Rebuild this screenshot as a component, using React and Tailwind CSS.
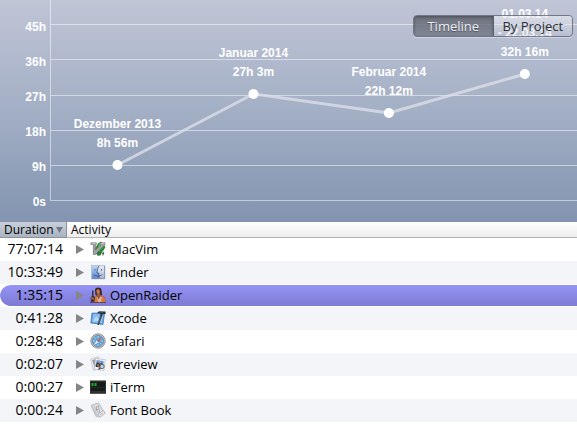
const TICKS = ['45h', '36h', '27h', '18h', '9h', '0s'];
const GRID = [24, 59, 95, 130, 165, 200];

const POINTS = [
  { x: '12.8%', y: 165, lines: ['Dezember 2013', '8h 56m'] },
  { x: '38.6%', y: 94, lines: ['Januar 2014', '27h 3m'] },
  { x: '64.3%', y: 113, lines: ['Februar 2014', '22h 12m'] },
  { x: '90.1%', y: 74, lines: ['01.03.14', '- 22.03.14', '32h 16m'] },
];

function MacVimIcon() {
  return (
    <svg className="block size-4" viewBox="0 0 16 16" aria-hidden="true">
      <path d="M8 2.500 11 .5 15.500 6 13.500 9.500 9 15 3 10.500Z" fill="#2f8a35" />
      <path d="M9 3h4L8 9Z" fill="#6cc264" />
      <path d="M.8 1.800h5.500v1.700H5.500v5.500L11 3.500h-1V1.800h5v2L5.500 13.500H3.300V3.500H.8Z" fill="#9ea29f" stroke="#686e6a" strokeWidth="0.6" />
      <path d="M1.500 2.600h4.300M10.500 2.600h4" stroke="#d9dbda" strokeWidth="0.7" />
      <path d="m8.500 11-1 3.500M10 14.500l1-3 1 1 1.800-1-1 3" fill="none" stroke="#2b5f31" strokeWidth="1" />
    </svg>
  );
}

function FinderIcon() {
  return (
    <svg className="block size-4" viewBox="0 0 16 16" aria-hidden="true">
      <defs>
        <linearGradient id="finderLeft" x2="0" y2="1">
          <stop stopColor="#bcd3f4" />
          <stop offset="1" stopColor="#5b86d0" />
        </linearGradient>
        <linearGradient id="finderRight" x2="0" y2="1">
          <stop stopColor="#e9eef6" />
          <stop offset="1" stopColor="#a9b9d6" />
        </linearGradient>
      </defs>
      <rect x="1.500" y="1.500" width="13" height="13" fill="url(#finderRight)" stroke="#a3b2cc" strokeWidth="0.7" />
      <path d="M2 2h6.500C7.500 4.500 7 6.500 7 9h1.700c0 2 .2 3.500.6 5.500H2Z" fill="url(#finderLeft)" />
      <path d="M9 2C7.500 4.500 7 6.500 7 9h1.700c0 2 .2 3.500.6 5M5 5v1.500M11.500 5v1.500M3.500 10.500c2.500 2 6.500 2 9 0" fill="none" stroke="#34497d" strokeWidth="0.8" />
      <path d="M1.500 14.700h13.200V2" fill="none" stroke="#6f7f9e" strokeWidth="0.7" />
    </svg>
  );
}

function RaiderIcon() {
  return (
    <svg className="block size-4" viewBox="0 0 16 16" aria-hidden="true">
      <path d="M5 3C5.500-.2 11-.2 11.500 3l.5 5-3 2-3.500-2Z" fill="#35211d" />
      <path d="M6 3.500c.5-2 3.500-2 4 0L10 7l2 1.500 3 2 .5 5H4.500V10L7 8Z" fill="#955640" />
      <path d="M7 3.500h2.500L9 6.500H7.500Z" fill="#c98765" />
      <path d="M6 10h1.500l1 2.500 2-3H12L14 15.500H5Z" fill="#d5b9a5" />
      <path d="M5 9.500 6.500 9l2 6.500H4ZM12 9l2.500 1.500 1 5H11Z" fill="#e27435" />
      <path d="M2 3.500h1.500V9L5 10l-.5 4.500L1 15l-.5-4L2 9Z" fill="#343039" />
      <path d="M1 10.500h3v2H1Z" fill="#a3684f" />
      <path d="M0 15.600h16" stroke="#453440" strokeWidth="0.8" />
    </svg>
  );
}

function XcodeIcon() {
  return (
    <svg className="block size-4" viewBox="0 0 16 16" aria-hidden="true">
      <path d="M2 3 14.500 3.500 13 14.500.8 13Z" fill="#4f91dc" stroke="#3972b6" strokeWidth="0.7" />
      <path d="M3 4 13.500 4.500 12.300 13.400 2 12.200Z" fill="#8abef2" />
      <path d="M4 11.500 6.500 7l2.500 5M4.500 10h4" fill="none" stroke="#d8edfd" strokeWidth="0.9" />
      <path d="M10.800 3.500 12.500 5 8.800 15 7.300 14.500Z" fill="#27303b" />
      <path d="M11 6 8.200 13.500" stroke="#8d98a5" strokeWidth="0.6" />
      <path d="M7 3C8.500.8 11 .5 13 1.500L15.500 1.500v2.500L13 4 12 4.800 10 3.500Z" fill="#252d38" />
      <path d="M8.800 2c1.300-.6 2.500-.4 3.700.4" fill="none" stroke="#a7b3c0" strokeWidth="0.7" />
    </svg>
  );
}

function SafariIcon() {
  return (
    <svg className="block size-4" viewBox="0 0 16 16" aria-hidden="true">
      <circle cx="8" cy="8" r="7.200" fill="#c3c6ca" stroke="#868b92" strokeWidth="0.9" />
      <circle cx="8" cy="8" r="5.600" fill="#64a5dc" stroke="#687a8d" strokeWidth="0.7" />
      <path d="M8 3v1.500M8 11.500V13M3 8h1.500M11.500 8H13M4.500 4.500l1 1M10.500 10.500l1 1" stroke="#e8f4ff" strokeWidth="0.8" />
      <path d="M12 4 9 9 7 7Z" fill="#d0685c" />
      <path d="M4 12 7 7 9 9Z" fill="#f3f6f8" />
      <circle cx="8" cy="8" r="0.800" fill="#34516e" />
    </svg>
  );
}

function PreviewIcon() {
  return (
    <svg className="block size-4" viewBox="0 0 16 16" aria-hidden="true">
      <path d="M.8 3 8.500.8 11.500 12 3.500 14.500Z" fill="#f3f3f3" stroke="#b9bcc0" strokeWidth="0.7" />
      <path d="M2.200 4 8 2.500l2 7.500-5.500 1.500Z" fill="#8d98aa" />
      <path d="M5.500 2.500 15.200 3.700 14 14.500 4.500 13Z" fill="#fafafa" stroke="#b4b8bd" strokeWidth="0.7" />
      <path d="M6.500 4 13.800 5 13 11.800 5.500 10.700Z" fill="#78a2d6" />
      <path d="m5.800 8.500 2-2.500 2 2 1.800-1.500 1.700 2-.5 3.500-7-1.300Z" fill="#3f3230" />
      <path d="m7.800 8 .5 2.500M11 7.500l.3 2" stroke="#dfa673" />
      <circle cx="12" cy="10.500" r="2.200" fill="#c0cfdb" stroke="#4d545d" strokeWidth="0.8" />
      <path d="M10.300 12 8.500 13.500" stroke="#343a42" strokeWidth="1.200" />
    </svg>
  );
}

function ITermIcon() {
  return (
    <svg className="block size-4" viewBox="0 0 16 16" aria-hidden="true">
      <rect y="1" width="16" height="14" fill="#303231" />
      <rect y="1" width="16" height="1" fill="#8b8e8c" />
      <rect x="1" y="3" width="14" height="9" fill="#161d18" />
      <path d="M1 8.500h14" stroke="#2b322d" strokeWidth="0.7" />
      <path d="M1.500 4h2v3h-2ZM4.500 4h2v3h-2Z" fill="#25a636" />
      <path d="M0 14.500h16" stroke="#555856" />
    </svg>
  );
}

function FontBookIcon() {
  return (
    <svg className="block size-4" viewBox="0 0 16 16" aria-hidden="true">
      <path d="M1 3.500 8.500.8l6 9.700-5.500 4.500-3-.5Z" fill="#d4d6d9" stroke="#b0b3b7" strokeWidth="0.7" />
      <path d="m3 4 5-2 5.300 8.500L8.500 14Z" fill="#e2e3e6" />
      <path d="m2 4.500 5 9.500M4 3.600 9 12.700" stroke="#b3b6ba" strokeWidth="0.8" />
      <path d="m6.500 4.500 2-.8 1 7M6.500 4.500l-.3 4.500M6.500 8l2-1" fill="none" stroke="#a0a3a8" strokeWidth="0.9" />
      <path d="m8 12.500 5-4.300 2.200 3L10 15.300Z" fill="#eeeeef" stroke="#a6a9ad" strokeWidth="0.8" />
      <path d="m10 13 3-2.500" stroke="#9b9ea2" strokeWidth="0.8" />
    </svg>
  );
}

const ROWS = [
  { time: '77:07:14', name: 'MacVim', Icon: MacVimIcon },
  { time: '10:33:49', name: 'Finder', Icon: FinderIcon },
  { time: '1:35:15', name: 'OpenRaider', Icon: RaiderIcon, selected: true },
  { time: '0:41:28', name: 'Xcode', Icon: XcodeIcon },
  { time: '0:28:48', name: 'Safari', Icon: SafariIcon },
  { time: '0:02:07', name: 'Preview', Icon: PreviewIcon },
  { time: '0:00:27', name: 'iTerm', Icon: ITermIcon },
  { time: '0:00:24', name: 'Font Book', Icon: FontBookIcon },
];

function Timeline() {
  return (
    <section className="relative flex h-[222px] bg-linear-to-b from-[#c0c5d6] via-[#a3afc5] to-[#8294b0] font-['Liberation_Sans',Arial,sans-serif] text-xs font-bold text-white">
      <div className="flex w-[50px] flex-col pt-2 pr-1 text-right">
        {TICKS.map((t) => (
          <span key={t} className="h-[35px] pt-[11px] leading-4">{t}</span>
        ))}
      </div>
      <svg className="h-full min-w-0 flex-1" role="img" aria-label="Time per month">
        <g shapeRendering="crispEdges" fill="#ffffff" fillOpacity="0.5">
          <rect width="1" height="201" />
          {GRID.map((y) => (
            <rect key={y} x="1" y={y} width="100%" height="1" />
          ))}
        </g>
        {POINTS.slice(1).map((p, i) => (
          <line key={p.x} x1={POINTS[i].x} y1={POINTS[i].y} x2={p.x} y2={p.y} stroke="#dcdfe9" strokeOpacity="0.8" strokeWidth="3" />
        ))}
        {POINTS.map((p) => (
          <g key={p.x} fill="white" textAnchor="middle">
            <circle cx={p.x} cy={p.y} r="5" />
            {p.lines.map((line, i) => (
              <text key={line} x={p.x} y={p.y - 18 - 19 * (p.lines.length - 1 - i)}>{line}</text>
            ))}
          </g>
        ))}
      </svg>
      <div className="absolute top-[15px] right-1 flex h-[22px] w-40 overflow-hidden rounded-[4px] border border-[#5f6470]/80 font-['Open_Sans','Noto_Sans',sans-serif] text-[13px] font-normal shadow-[0_1px_0_rgba(255,255,255,0.35)]">
        <button type="button" aria-pressed="true" className="flex-1 border-r border-[#555a66]/80 bg-linear-to-b from-[#5a5e69]/80 to-[#6f7481]/75 leading-5 text-[#eceef3] shadow-[inset_0_1px_3px_rgba(0,0,0,0.35)] text-shadow-[0_1px_1px_rgba(0,0,0,0.4)]">Timeline</button>
        <button type="button" aria-pressed="false" className="flex-1 bg-linear-to-b from-[#eef0f5]/60 to-[#b8bdcb]/20 leading-5 text-[#2e3035]">By Project</button>
      </div>
    </section>
  );
}

export default function App() {
  return (
    <main className="min-h-screen bg-white font-['Open_Sans','Noto_Sans',sans-serif] text-black">
      <Timeline />
      <table className="w-full table-fixed border-separate border-spacing-0">
        <thead className="text-left text-xs leading-[15px]">
          <tr className="h-4">
            <th scope="col" aria-sort="descending" className="w-[67px] border-r border-b border-[#8c939d] bg-linear-to-b from-[#c9d0da] to-[#a9b4c2] p-0 pl-1 font-normal">
              <div className="flex items-center justify-between pr-[3px]">
                Duration
                <svg className="h-[6px] w-[7px]" viewBox="0 0 7 6" aria-hidden="true"><path d="M0 0h7L3.500 6Z" fill="#6f7883" /></svg>
              </div>
            </th>
            <th scope="col" className="border-b border-[#b4b4b4] bg-linear-to-b from-white to-[#ededed] p-0 pl-1 font-normal">Activity</th>
          </tr>
        </thead>
        <tbody className="text-sm leading-5">
          {ROWS.map(({ time, name, Icon, selected }) => (
            <tr key={name} aria-selected={selected} className={selected ? '' : 'even:bg-[#f4f5f8]'}>
              <td className={`h-[23px] border-y border-transparent bg-clip-padding p-0 pr-1 pb-px text-right ${selected ? 'rounded-l-full bg-linear-to-b from-[#9593f6] to-[#7d7bd3]' : ''}`}>{time}</td>
              <td className={`h-[23px] border-y border-transparent bg-clip-padding p-0 pb-px pl-[9px] text-[13px] ${selected ? 'bg-linear-to-b from-[#9593f6] to-[#7d7bd3]' : ''}`}>
                <div className="flex items-center leading-5">
                  <button type="button" aria-label={`Expand ${name}`} className="mr-[6px]">
                    <svg className="block h-[9px] w-2" viewBox="0 0 8 9" aria-hidden="true"><path d="M0 0 8 4.500 0 9Z" fill="#858585" /></svg>
                  </button>
                  <Icon />
                  <span className="pl-1">{name}</span>
                </div>
              </td>
            </tr>
          ))}
        </tbody>
      </table>
    </main>
  );
}
